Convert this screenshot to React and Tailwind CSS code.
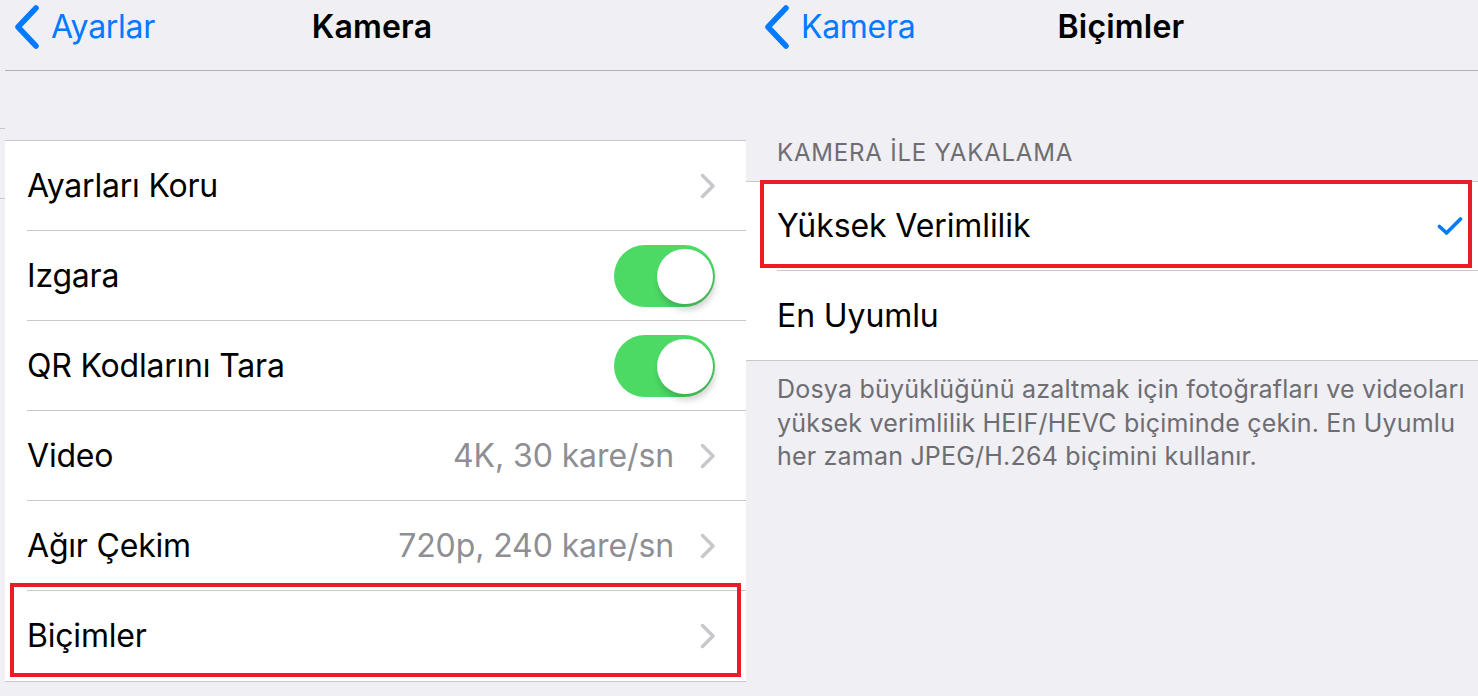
import React from 'react';

const font = { fontFamily: 'Inter, "Noto Sans", sans-serif' };

const BackChevron = () => (
  <svg width="26" height="44" viewBox="0 0 26 44" className="shrink-0">
    <path d="M22 3 L4 22 L22 41" fill="none" stroke="#007aff" strokeWidth="5.5" strokeLinecap="round" strokeLinejoin="round" />
  </svg>
);

const Chevron = () => (
  <svg width="16" height="26" viewBox="0 0 16 26" className="shrink-0">
    <path d="M2.5 2.5 L13 13 L2.5 23.5" fill="none" stroke="#c7c7cc" strokeWidth="3.5" strokeLinecap="round" strokeLinejoin="round" />
  </svg>
);

const Check = () => (
  <svg width="26" height="20" viewBox="0 0 26 20" className="shrink-0">
    <path d="M2.5 10.5 L9.5 17 L23.5 3" fill="none" stroke="#007aff" strokeWidth="3.6" strokeLinecap="round" strokeLinejoin="round" />
  </svg>
);

const Toggle = () => (
  <div className="relative w-[101px] h-[62px] rounded-full bg-[#4cd964] shrink-0">
    <div className="absolute right-[2px] top-[4px] w-[56px] h-[55px] rounded-full bg-white shadow-[2px_6px_6px_rgba(0,0,0,0.18)]" />
  </div>
);

const NavBar = ({ back, title, titleShift }) => (
  <div className="relative h-[70px] flex items-start">
    <div className="flex items-center gap-[11px] pt-[5px]">
      <BackChevron />
      <span className="text-[32px] leading-[44px] text-[#007aff] tracking-[-0.3px]">{back}</span>
    </div>
    <div className={`absolute inset-x-0 top-[5px] flex justify-center ${titleShift}`}>
      <span className="text-[32px] leading-[44px] font-semibold text-black tracking-[0.2px]">{title}</span>
    </div>
  </div>
);

const rows = [
  { label: 'Ayarları Koru', type: 'chevron' },
  { label: 'Izgara', type: 'toggle' },
  { label: 'QR Kodlarını Tara', type: 'toggle' },
  { label: 'Video', value: '4K, 30 kare/sn', type: 'chevron' },
  { label: 'Ağır Çekim', value: '720p, 240 kare/sn', type: 'chevron' },
  { label: 'Biçimler', type: 'chevron', marked: true },
];

export default function App() {
  return (
    <div className="w-[1478px] h-[696px] bg-[#efeff4] flex overflow-hidden" style={font}>
      {/* thin strip of the screen behind */}
      <div className="w-[5px] shrink-0 flex flex-col">
        <div className="h-[129px] border-b border-[#c8c7cc]" />
        <div className="h-[70px] border-b border-[#c8c7cc]" />
      </div>

      {/* Kamera */}
      <div className="w-[741px] shrink-0">
        <div className="pl-[9px] border-b border-[#b2b2b2]">
          <NavBar back="Ayarlar" title="Kamera" titleShift="pr-[16px]" />
        </div>
        <div className="h-[69px]" />
        <div className="bg-white border-t border-b border-[#c8c7cc]">
          {rows.map((r, i) => (
            <div key={r.label} className="relative pl-[22px]">
              <div className={`h-[90px] flex items-center pr-[30px] ${i < rows.length - 1 ? 'border-b border-[#c8c7cc]' : ''}`}>
                <span className="flex-1 text-[32px] text-black tracking-[-0.2px]">{r.label}</span>
                {r.value && (
                  <span className="text-[32px] text-[#8e8e93] tracking-[-0.1px] mr-[26px]">{r.value}</span>
                )}
                {r.type === 'chevron' ? <Chevron /> : <div className="mr-[1px]"><Toggle /></div>}
              </div>
              {r.marked && (
                <div className="absolute left-[5px] top-[-8px] w-[731px] h-[94px] border-4 border-[#ec1c24]" />
              )}
            </div>
          ))}
        </div>
      </div>

      {/* Biçimler */}
      <div className="flex-1">
        <div className="pl-[18px] border-b border-[#b2b2b2]">
          <NavBar back="Kamera" title="Biçimler" titleShift="pl-[0px]" />
        </div>
        <div className="h-[110px] flex items-end pl-[31px] pb-[13px]">
          <span className="text-[24px] leading-[30px] text-[#6d6d72] tracking-[0.8px]">KAMERA İLE YAKALAMA</span>
        </div>
        <div className="bg-white border-t border-b border-[#c8c7cc]">
          <div className="relative pl-[31px]">
            <div className="h-[89px] flex items-center pr-[15px] border-b border-[#c8c7cc]">
              <span className="flex-1 text-[32px] text-black tracking-[-0.1px]">Yüksek Verimlilik</span>
              <Check />
            </div>
            <div className="absolute left-[14px] top-[-2px] w-[712px] h-[88px] border-4 border-[#ec1c24]" />
          </div>
          <div className="pl-[31px]">
            <div className="h-[89px] flex items-center">
              <span className="text-[32px] text-black tracking-[-0.1px]">En Uyumlu</span>
            </div>
          </div>
        </div>
        <div className="pl-[31px] pt-[12px] text-[25px] leading-[33.5px] text-[#6d6d72] tracking-[0.2px] whitespace-nowrap">
          <div>Dosya büyüklüğünü azaltmak için fotoğrafları ve videoları</div>
          <div>yüksek verimlilik HEIF/HEVC biçiminde çekin. En Uyumlu</div>
          <div>her zaman JPEG/H.264 biçimini kullanır.</div>
        </div>
      </div>
    </div>
  );
}
